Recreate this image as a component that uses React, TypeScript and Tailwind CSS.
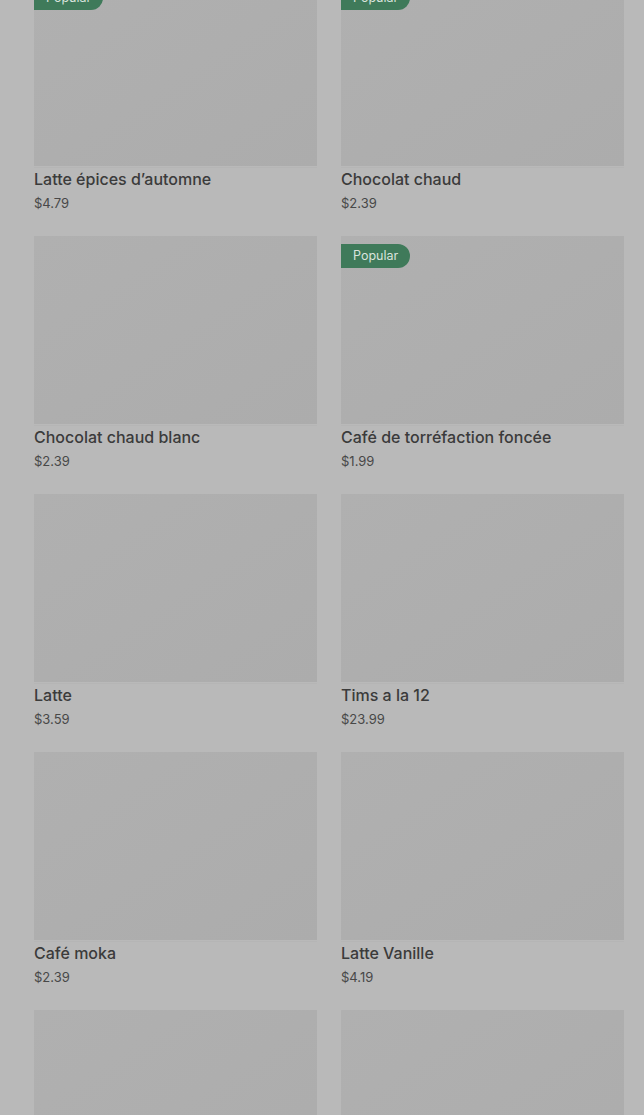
const items = [
  { name: "Latte épices d’automne", price: "$4.79", popular: true },
  { name: "Chocolat chaud", price: "$2.39", popular: true },
  { name: "Chocolat chaud blanc", price: "$2.39", popular: false },
  { name: "Café de torréfaction foncée", price: "$1.99", popular: true },
  { name: "Latte", price: "$3.59", popular: false },
  { name: "Tims a la 12", price: "$23.99", popular: false },
  { name: "Café moka", price: "$2.39", popular: false },
  { name: "Latte Vanille", price: "$4.19", popular: false },
  { name: "Cappuccino", price: "$3.59", popular: false },
  { name: "Café glacé", price: "$2.99", popular: false },
];

function MenuCard({
  name,
  price,
  popular,
}: {
  name: string;
  price: string;
  popular: boolean;
}) {
  return (
    <div className="flex flex-col">
      <div className="relative h-[188px] w-full bg-gradient-to-br from-[#b0b0b0] to-[#acacac]">
        {popular && (
          <span className="absolute left-0 top-2 flex h-6 items-center rounded-r-full bg-[#3f7a5a] pl-3 pr-3 text-[12.5px] text-[#d9e3dd]">
            Popular
          </span>
        )}
      </div>
      <div className="mt-px border-t border-[#b5b5b5] text-[16px] font-medium leading-[23px] text-[#3b3b3b]">
        {name}
      </div>
      <div className="pt-[2px] text-[13px] leading-5 text-[#484848]">{price}</div>
    </div>
  );
}

export default function App() {
  return (
    <div
      className="h-[1115px] overflow-hidden bg-[#b9b9b9] pl-[34px] pr-[20px]"
      style={{ fontFamily: "Inter, 'Noto Sans', sans-serif" }}
    >
      <div className="-mt-[22px] grid grid-cols-2 gap-x-6 gap-y-[23px]">
        {items.map((item) => (
          <MenuCard key={item.name} {...item} />
        ))}
      </div>
    </div>
  );
}
